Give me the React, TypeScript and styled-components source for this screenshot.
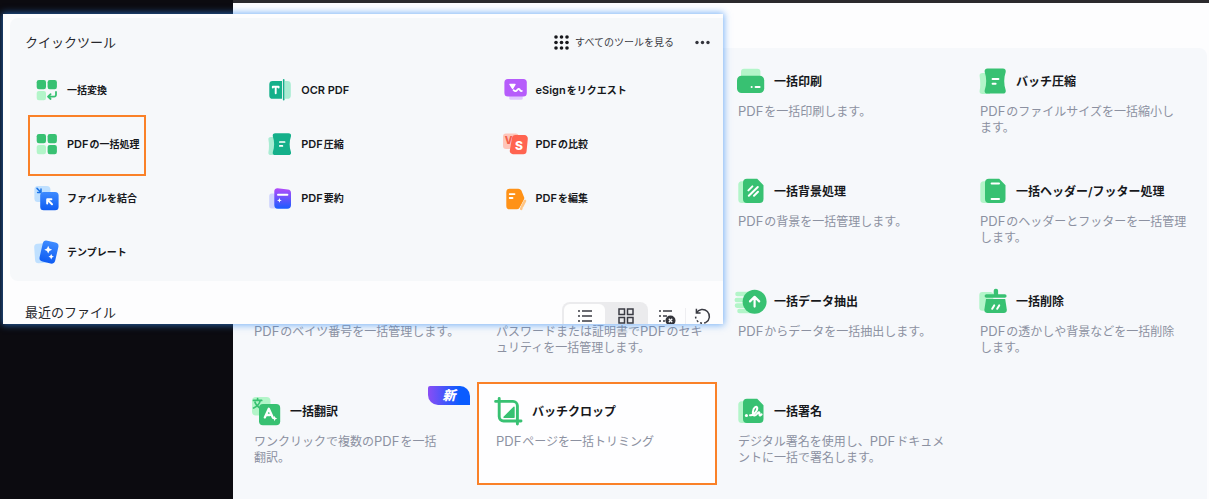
import React from 'react';
import styled, { createGlobalStyle, css } from 'styled-components';

const GlobalStyle = createGlobalStyle`
  * { box-sizing: border-box; }
  body {
    margin: 0;
    background: #0c0b10;
    font-family: Inter, 'Noto Sans CJK JP', sans-serif;
    color: #17181c;
    text-autospace: no-autospace;
  }
  button { font: inherit; color: inherit; background: none; border: 0; padding: 0; cursor: pointer; }
  h2, h3, p { margin: 0; }
  svg { display: block; overflow: visible; flex: none; }
`;

const Page = styled.div`
  display: flex;
  min-height: 100vh;
`;

const Backdrop = styled.aside`
  flex: none;
  width: 233px;
  background: #0c0b10;
`;

const Main = styled.main`
  flex: 1;
  display: flex;
  flex-direction: column;
  min-width: 0;
  background: #fdfdfe;
  border-top: 3px solid #2b2a2d;
`;

const BatchPanel = styled.section`
  flex: 1;
  margin: 45px 2px 0 0;
  padding: 4px 6px 6px 2px;
  border-top-right-radius: 8px;
  background: #f6f8fb;
`;

const CardGrid = styled.div`
  display: grid;
  grid-template-columns: repeat(4, minmax(0, 1fr));
  grid-auto-rows: minmax(103px, auto);
  gap: 7px 2px;
`;

const Card = styled.article<{ $col: number; $row: number; $active?: boolean }>`
  position: relative;
  grid-column: ${(p) => p.$col};
  grid-row: ${(p) => p.$row};
  padding: 13px 0 0 15px;
  border: 2px solid ${(p) => (p.$active ? '#fa8128' : 'transparent')};
  background: ${(p) => (p.$active ? '#fefeff' : 'transparent')};
`;

const CardHead = styled.div`
  display: flex;
  align-items: center;
  gap: 10px;
  height: 28px;
`;

const CardTitle = styled.h3`
  padding-top: 2px;
  font-size: 12px;
  line-height: 16px;
  font-weight: 600;
  white-space: nowrap;
`;

const CardText = styled.p`
  margin-top: 8px;
  padding-left: 2px;
  font-size: 12px;
  line-height: 16px;
  color: #8c91a1;
  white-space: nowrap;
`;

const NewBadge = styled.span`
  position: absolute;
  top: 2px;
  right: 3px;
  width: 42px;
  border-radius: 2px 10px 0 10px;
  background: linear-gradient(90deg, #8a4df5, #0a5cff 75%);
  color: #fff;
  font-size: 13px;
  line-height: 19px;
  font-weight: 900;
  font-style: italic;
  text-align: center;
`;

const QuickWindow = styled.section`
  position: absolute;
  top: 14px;
  left: 3px;
  width: min(720px, calc(100vw - 6px));
  height: 310px;
  padding: 4px 0 0 7px;
  overflow: hidden;
  background: #fdfdfe;
  box-shadow: 0 0 7px 1px rgba(50, 140, 245, 0.65);
`;

const QuickPanel = styled.div`
  padding: 12px 9px 16px 15px;
  border-radius: 8px 0 0 8px;
  background: #f6f8fa;
`;

const HeadRow = styled.div`
  display: flex;
  align-items: center;
  height: 24px;
  margin-bottom: 23px;
  padding-right: 4px;
`;

const Heading = styled.h2`
  flex: 1;
  font-size: 13px;
  line-height: 20px;
  font-weight: 400;
  color: #26272c;
`;

const AllTools = styled.button`
  display: flex;
  align-items: center;
  gap: 6px;
  margin-right: 21px;
  font-size: 10px;
  line-height: 16px;
  color: #3c3d45;
`;

const ToolGrid = styled.div`
  display: grid;
  grid-template-columns: 34% 34% 1fr;
  row-gap: 28px;
  padding-left: 9px;
  margin-right: -9px;
`;

const Tool = styled.button<{ $marked?: boolean }>`
  position: relative;
  display: flex;
  align-items: center;
  justify-self: start;
  gap: 7px;
  height: 26px;
  font-size: 10px;
  line-height: 16px;
  font-weight: 600;
  white-space: nowrap;
  ${(p) =>
    p.$marked &&
    css`
      &::after {
        content: '';
        position: absolute;
        inset: -16px -6px -19px -6px;
        border: 2px solid #fa8128;
      }
    `}
`;

const RecentRow = styled.div`
  display: flex;
  align-items: flex-start;
  margin-top: 21px;
  padding: 0 12px 0 15px;
`;

const ViewSwitch = styled.div`
  display: flex;
  width: 86px;
  height: 30px;
  margin-right: 11px;
  padding: 2px;
  border-radius: 8px;
  background: #ebebed;
`;

const ViewButton = styled.button<{ $on?: boolean }>`
  flex: 1;
  display: flex;
  justify-content: center;
  padding-top: 5px;
  border-radius: 6px;
  background: ${(p) => (p.$on ? '#fefefe' : 'transparent')};
`;

const RowButton = styled.button`
  padding-top: 6px;
`;

const Divider = styled.span`
  width: 1px;
  height: 16px;
  margin: 6px 8px 0 9px;
  background: #eeeef1;
`;

const Latin = styled.span<{ $spaced: boolean }>`
  margin-right: ${(p) => (p.$spaced ? '1px' : '0')};
  font-size: calc(1em + 1px);
`;

/* Sets Latin words a step larger, with a little air before the Japanese that follows. */
function Mixed({ text }: { text: string }) {
  const parts = text.split(/([A-Za-z]+(?: [A-Za-z]+)*)/).filter(Boolean);
  return (
    <>
      {parts.map((part, i) =>
        /^[A-Za-z]/.test(part) ? (
          <Latin key={i} $spaced={i < parts.length - 1}>
            {part}
          </Latin>
        ) : (
          part
        ),
      )}
    </>
  );
}

const G = '#38c172';
const GL = '#b3f5c9';
const T = '#14b08a';
const TL = '#a9ecd3';

const Big = ({ children }: { children: React.ReactNode }) => (
  <svg width="28" height="28" viewBox="0 0 28 28" fill="none" strokeLinecap="round" strokeLinejoin="round" aria-hidden="true">
    {children}
  </svg>
);
const Small = ({ children }: { children: React.ReactNode }) => (
  <svg width="26" height="26" viewBox="0 0 26 26" fill="none" strokeLinecap="round" strokeLinejoin="round" aria-hidden="true">
    {children}
  </svg>
);

const DocBase = () => (
  <>
    <rect x="2.3" y="4.3" width="14" height="21.7" rx="3.5" fill={GL} />
    <path d="M11 1.8h10.2l6.3 6.4V22a4 4 0 0 1-4 4H11a4 4 0 0 1-4-4V5.8a4 4 0 0 1 4-4Z" fill={G} />
  </>
);

const PrintIcon = () => (
  <Big>
    <rect x="5" y="1.7" width="19.4" height="14" rx="3" fill={GL} />
    <rect x="1" y="8.7" width="27.2" height="17.3" rx="4.5" fill={G} />
    <path d="M15.6 20h.1M19.6 20h4" stroke="#fff" strokeWidth="2" />
  </Big>
);
const BackgroundIcon = () => (
  <Big>
    <DocBase />
    <path d="M12.4 13.4l4-4M12.8 18.8l9-8.8M18 18.8l4-4" stroke="#fff" strokeWidth="2" />
  </Big>
);
const ExtractIcon = () => (
  <Big>
    <path d="M1.5 7H12M.8 13h10M1 18.6h10M3.5 24H14" stroke={GL} strokeWidth="4.6" />
    <circle cx="18.6" cy="14.8" r="12" fill={G} />
    <path d="M18.6 19.6V10M14 14.4l4.6-4.6 4.6 4.6" stroke="#fff" strokeWidth="2.2" />
  </Big>
);
const SignatureIcon = () => (
  <Big>
    <DocBase />
    <path d="M10.4 18.6h.1" stroke="#fff" strokeWidth="3" />
    <path d="M14 18.2c2.6 1 8-4.4 7.2-7.6-.8-2-3.600-.2-4.200 3.400-.6 3 .2 4.800 1.800 4.600 2-.2 2.400-2.800 4-3.400 1.400-.2 0 3.400 1.200 3.400l1.600-1.200" stroke="#fff" strokeWidth="2" />
  </Big>
);
const ShrinkIcon = () => (
  <Big>
    <path d="M4.500 6H12v21H4.500c-2 0-3.200-1.300-2.900-3 .9-4 .9-9.800 0-15-.3-1.700.9-3 2.900-3Z" fill={GL} />
    <path d="M9.600 1.400h15.200c2.200 0 3.400 1.600 2.900 3.500-2 6-2 12.200 0 18.300.5 1.900-.7 3.400-2.900 3.400H9.600c-2.200 0-3.400-1.500-2.900-3.400 2-6.100 2-12.300 0-18.300-.5-1.900.7-3.500 2.900-3.500Z" fill={G} />
    <path d="M14.600 12h5.800M14.600 16.700h3" stroke="#fff" strokeWidth="2" />
  </Big>
);
const HeaderFooterIcon = () => (
  <Big>
    <DocBase />
    <path d="M13.600 6.400h7.400M13.600 22h7.400" stroke="#fff" strokeWidth="2" />
  </Big>
);
const DeleteIcon = () => (
  <Big>
    <rect x="1.300" y="5" width="14" height="18.700" rx="3" fill={GL} />
    <rect x="15.700" y="1.800" width="4.400" height="8" rx="2" fill={G} />
    <rect x="6.600" y="7.200" width="22" height="3.600" rx="1.800" fill={G} />
    <path d="M8 12h19.200l1.600 10.500c.3 2-1 3.500-3 3.500H9.400c-2 0-3.300-1.500-3-3.500Z" fill={G} />
    <path d="M14.200 21.800l2-3.400M19.200 21.800l2-3.400" stroke="#fff" strokeWidth="2" />
  </Big>
);
const TranslateIcon = () => (
  <Big>
    <rect x="0" y="0" width="18.500" height="18.500" rx="4" fill={GL} />
    <path d="M1.500 3.400h8.200M5.600 1.600v1.800M8.200 3.600C7.400 7 5 9.600 1.600 11M3 5.200c.8 2.600 2.400 4.400 4.400 5.600" stroke={G} strokeWidth="1.700" />
    <rect x="7" y="7" width="21.200" height="21.200" rx="4" fill={G} />
    <path d="M12.800 20.400l4-8.600 4 8.600M14.400 18h3.600" stroke="#fff" strokeWidth="2.300" />
    <path d="M22.600 18.800l.8 1.900 1.900.8-1.900.8-.8 1.900-.8-1.900-1.900-.8 1.900-.8Z" fill="#fff" />
  </Big>
);
const CropIcon = () => (
  <Big>
    <path d="M1.600 4.400H19a4.400 4.400 0 0 1 4.400 4.400V27M5.200 1.400v18.200A4.400 4.400 0 0 0 9.600 24H27" stroke={G} strokeWidth="2.900" />
    <path d="M20 10.200v10H10Z" fill={G} stroke={G} strokeWidth="1.400" />
  </Big>
);

const Squares = ({ enter }: { enter?: boolean }) => (
  <Small>
    <rect x="2.700" y="3" width="9.300" height="9.300" rx="2.200" fill={G} />
    <rect x="13.600" y="3" width="9.300" height="9.300" rx="2.200" fill={G} />
    <rect x="2.700" y="13.900" width="9.300" height="9.300" rx="2.200" fill={GL} />
    {enter ? (
      <path d="M22 15v2.800a1.800 1.800 0 0 1-1.800 1.800h-5.600M16.600 17.200l-2.600 2.400 2.600 2.400" stroke={G} strokeWidth="1.800" />
    ) : (
      <rect x="13.600" y="13.900" width="9.300" height="9.300" rx="2.200" fill={G} />
    )}
  </Small>
);
const MergeIcon = () => (
  <Small>
    <defs>
      <linearGradient id="blue" x1="0" y1="0" x2="0" y2="1">
        <stop stopColor="#3e8bff" />
        <stop offset="1" stopColor="#0f5cf2" />
      </linearGradient>
    </defs>
    <rect x=".4" y="1" width="16" height="16" rx="3.500" fill="#bfe0ff" />
    <path d="M3 3.400l3.600 3.600M7 4v3.400H3.600" stroke="#1c74e8" strokeWidth="1.500" />
    <rect x="6.200" y="7" width="18.400" height="18.200" rx="3.500" fill="url(#blue)" />
    <path d="M18 19.200l-4.600-4.600M13.200 18.400v-4.200h4.200" stroke="#fff" strokeWidth="2" />
  </Small>
);
const TemplateIcon = () => (
  <Small>
    <rect x=".6" y="4.400" width="14" height="19.600" rx="3.500" transform="rotate(-4 7 14)" fill="#bfe0ff" />
    <rect x="7" y="2.400" width="16" height="21.400" rx="3.800" transform="rotate(13 15 13)" fill="url(#blue)" />
    <path d="M14.200 6.800l1.200 2.700 2.700 1.200-2.700 1.200-1.200 2.700-1.200-2.700-2.700-1.200 2.700-1.200Z" fill="#fff" />
    <path d="M17.200 15l.9 1.800 1.800.9-1.800.9-.9 1.800-.9-1.800-1.800-.9 1.800-.9Z" fill="#fff" />
  </Small>
);
const OcrIcon = () => (
  <Small>
    <path d="M17 4h2.400A3.400 3.400 0 0 1 22.800 7.400v11a3.400 3.400 0 0 1-3.400 3.400H17Z" fill={TL} />
    <path d="M4.700 4H14v17.800H4.700a3.400 3.400 0 0 1-3.400-3.400v-11A3.400 3.400 0 0 1 4.700 4Z" fill={T} />
    <path d="M15.700 2.700v20" stroke={T} strokeWidth="1.600" />
    <path d="M4.800 10.600v-.9h5.800v.9M7.700 9.700v6.600" stroke="#fff" strokeWidth="1.900" />
  </Small>
);
const CompressIcon = () => (
  <Small>
    <path d="M3 6h7v18H3c-2 0-2.900-1.200-2.600-2.600.8-4 .8-8.800 0-12.800C.1 7.200 1 6 3 6Z" fill={TL} />
    <path d="M7.400 2.300h13c2 0 3 1.300 2.600 2.900-1.800 5.300-1.800 10.700 0 16 .4 1.600-.6 2.900-2.600 2.900h-13c-2 0-3-1.300-2.600-2.900 1.800-5.300 1.800-10.700 0-16-.4-1.600.6-2.900 2.600-2.900Z" fill={T} />
    <path d="M11.800 11h4.800M11.800 14.900h2.600" stroke="#fff" strokeWidth="1.700" />
  </Small>
);
const SummaryIcon = () => (
  <Small>
    <defs>
      <linearGradient id="violet" x1="0" y1="0" x2="0" y2="1">
        <stop stopColor="#b44bfa" />
        <stop offset="1" stopColor="#1a5cff" />
      </linearGradient>
    </defs>
    <rect x="1.200" y="8.400" width="10" height="15" rx="2.500" fill="#cfd4fd" />
    <path d="M9.600 3.200l10.200 1.300A3.600 3.600 0 0 1 23 8v12.100a3.600 3.600 0 0 1-3.600 3.600H9.900a3.600 3.600 0 0 1-3.600-3.600V6.200a2.900 2.900 0 0 1 3.300-3Z" fill="url(#violet)" />
    <path d="M10 9.700h9.400" stroke="#fff" strokeWidth="2" />
    <path d="M11.400 13l.7 1.700 1.700.7-1.700.7-.7 1.700-.7-1.700-1.700-.7 1.700-.7Z" fill="#fff" />
  </Small>
);
const ESignIcon = () => (
  <Small>
    <rect x="6.300" y="17" width="13.400" height="5.800" rx="1.500" fill="#e0c6ff" />
    <rect x="1.400" y="2" width="22.400" height="17.400" rx="3.500" fill="#b65cfb" />
    <path d="M7 7.400h5l-2.400 4Z" fill="#fff" stroke="#fff" strokeWidth="1.400" />
    <path d="M10.600 13.200c1.800 1.800 3 .8 4-.6 1.200-1.400 2-.2 2.400.6.400.9 1 1 1.800.8" stroke="#fff" strokeWidth="1.800" />
  </Small>
);
const Letter = styled.text`
  font-family: Inter, sans-serif;
  font-weight: 800;
`;
const CompareIcon = () => (
  <Small>
    <rect x="0" y="2.400" width="15.600" height="15.600" rx="3" fill="#ffc5b9" />
    <Letter x="1.800" y="12.600" fontSize="10" fill="#f2604a">V</Letter>
    <path d="M12.400 4h9a3.400 3.400 0 0 1 3.400 3.800l-1.200 12.200a3.400 3.400 0 0 1-3.400 3.200H10a3.200 3.200 0 0 1-3.200-3.700L9 6.900A3.400 3.400 0 0 1 12.400 4Z" fill="#ff6450" />
    <Letter x="12" y="18.600" fontSize="12" fill="#fff">S</Letter>
  </Small>
);
const EditIcon = () => (
  <Small>
    <path d="M6.700 3.800h8.600a3.600 3.600 0 0 1 3.100 1.700l2.800 6.900c.2.700.1 1.400-.3 2l-4.200 8a3.600 3.600 0 0 1-3.200 1.900H6.700a3.400 3.400 0 0 1-3.400-3.400V7.200a3.400 3.400 0 0 1 3.400-3.400Z" fill="#ff9217" />
    <path d="M6.700 9.100h4.800M6.700 13h2.800" stroke="#fff" strokeWidth="1.800" />
    <path d="M22 16l-2.800 5.400M18.400 23.200l-.2.600" stroke="#ffc685" strokeWidth="2.600" />
  </Small>
);

const DotsGrid = () => (
  <svg width="15" height="15" viewBox="0 0 15 15" fill="#17181c" aria-hidden="true">
    {[2, 7.5, 13].map((y) => [2, 7.5, 13].map((x) => <circle key={`${x}-${y}`} cx={x} cy={y} r="1.800" />))}
  </svg>
);
const Ellipsis = () => (
  <svg width="15" height="15" viewBox="0 0 15 15" fill="#33343b" aria-hidden="true">
    <circle cx="2" cy="7.500" r="1.700" />
    <circle cx="7.500" cy="7.500" r="1.700" />
    <circle cx="13" cy="7.500" r="1.700" />
  </svg>
);
const ListIcon = () => (
  <svg width="14" height="16" viewBox="0 0 14 16" stroke="#3a3b43" strokeWidth="1.500" fill="none" aria-hidden="true">
    <path d="M0 2h2M0 7h2M0 12h2M4 2h10M4 7h10M4 12h10" />
  </svg>
);
const TilesIcon = () => (
  <svg width="16" height="16" viewBox="0 0 16 16" stroke="#3a3b43" strokeWidth="1.500" fill="none" aria-hidden="true">
    <rect x="1" y="0" width="5.500" height="5.500" />
    <rect x="9.500" y="0" width="5.500" height="5.500" />
    <rect x="1" y="8.500" width="5.500" height="5.500" />
    <rect x="9.500" y="8.500" width="5.500" height="5.500" />
  </svg>
);
const ClearListIcon = () => (
  <svg width="17" height="18" viewBox="0 0 17 18" stroke="#3a3b43" strokeWidth="1.500" fill="none" aria-hidden="true">
    <path d="M0 3h2M0 8h2M0 13h2M4 3h9M4 8h4M4 13h2" />
    <circle cx="11.500" cy="12.500" r="5" fill="#33343b" stroke="none" />
    <path d="M9.800 10.800l3.400 3.400M13.200 10.800l-3.400 3.400" stroke="#fff" strokeWidth="1.300" />
  </svg>
);
const HistoryIcon = () => (
  <svg width="17" height="17" viewBox="0 0 17 17" stroke="#3a3b43" strokeWidth="1.500" fill="none" aria-hidden="true">
    <path d="M2.400 .8v4.200h4.200M2.400 4.800A7 7 0 1 1 12 14.400" />
    <path d="M1.600 8.600A7 7 0 0 0 12 14.400" strokeDasharray="2 2" />
  </svg>
);

const tools = [
  { name: '一括変換', icon: <Squares enter /> },
  { name: 'OCR PDF', icon: <OcrIcon /> },
  { name: 'eSignをリクエスト', icon: <ESignIcon /> },
  { name: 'PDFの一括処理', icon: <Squares />, marked: true },
  { name: 'PDF圧縮', icon: <CompressIcon /> },
  { name: 'PDFの比較', icon: <CompareIcon /> },
  { name: 'ファイルを結合', icon: <MergeIcon /> },
  { name: 'PDF要約', icon: <SummaryIcon /> },
  { name: 'PDFを編集', icon: <EditIcon /> },
  { name: 'テンプレート', icon: <TemplateIcon /> },
];

type CardData = {
  col: number;
  row: number;
  title?: string;
  icon?: React.ReactNode;
  lines: string[];
  active?: boolean;
  badge?: string;
};

const cards: CardData[] = [
  { col: 3, row: 1, title: '一括印刷', icon: <PrintIcon />, lines: ['PDFを一括印刷します。'] },
  { col: 4, row: 1, title: 'バッチ圧縮', icon: <ShrinkIcon />, lines: ['PDFのファイルサイズを一括縮小し', 'ます。'] },
  { col: 3, row: 2, title: '一括背景処理', icon: <BackgroundIcon />, lines: ['PDFの背景を一括管理します。'] },
  { col: 4, row: 2, title: '一括ヘッダー/フッター処理', icon: <HeaderFooterIcon />, lines: ['PDFのヘッダーとフッターを一括管理', 'します。'] },
  { col: 1, row: 3, lines: ['PDFのベイツ番号を一括管理します。'] },
  { col: 2, row: 3, lines: ['パスワードまたは証明書でPDFのセキ', 'ュリティを一括管理します。'] },
  { col: 3, row: 3, title: '一括データ抽出', icon: <ExtractIcon />, lines: ['PDFからデータを一括抽出します。'] },
  { col: 4, row: 3, title: '一括削除', icon: <DeleteIcon />, lines: ['PDFの透かしや背景などを一括削除', 'します。'] },
  { col: 1, row: 4, title: '一括翻訳', icon: <TranslateIcon />, lines: ['ワンクリックで複数のPDFを一括', '翻訳。'], badge: '新' },
  { col: 2, row: 4, title: 'バッチクロップ', icon: <CropIcon />, lines: ['PDFページを一括トリミング'], active: true },
  { col: 3, row: 4, title: '一括署名', icon: <SignatureIcon />, lines: ['デジタル署名を使用し、PDFドキュメ', 'ントに一括で署名します。'] },
];

export default function App() {
  return (
    <>
      <GlobalStyle />
      <Page>
        <Backdrop />
        <Main>
          <BatchPanel>
            <CardGrid>
              {cards.map((c) => (
                <Card key={`${c.col}-${c.row}`} $col={c.col} $row={c.row} $active={c.active}>
                  <CardHead>
                    {c.icon}
                    {c.title && <CardTitle>{c.title}</CardTitle>}
                  </CardHead>
                  <CardText>
                    {c.lines.map((line, i) => (
                      <React.Fragment key={line}>
                        {i > 0 && <br />}
                        <Mixed text={line} />
                      </React.Fragment>
                    ))}
                  </CardText>
                  {c.badge && <NewBadge>{c.badge}</NewBadge>}
                </Card>
              ))}
            </CardGrid>
          </BatchPanel>
        </Main>
      </Page>
      <QuickWindow>
        <QuickPanel>
          <HeadRow>
            <Heading>クイックツール</Heading>
            <AllTools>
              <DotsGrid />
              すべてのツールを見る
            </AllTools>
            <button aria-label="…">
              <Ellipsis />
            </button>
          </HeadRow>
          <ToolGrid>
            {tools.map((t) => (
              <Tool key={t.name} $marked={t.marked}>
                {t.icon}
                <span>
                  <Mixed text={t.name} />
                </span>
              </Tool>
            ))}
          </ToolGrid>
        </QuickPanel>
        <RecentRow>
          <Heading>最近のファイル</Heading>
          <ViewSwitch>
            <ViewButton $on>
              <ListIcon />
            </ViewButton>
            <ViewButton>
              <TilesIcon />
            </ViewButton>
          </ViewSwitch>
          <RowButton>
            <ClearListIcon />
          </RowButton>
          <Divider />
          <RowButton>
            <HistoryIcon />
          </RowButton>
        </RecentRow>
      </QuickWindow>
    </>
  );
}
